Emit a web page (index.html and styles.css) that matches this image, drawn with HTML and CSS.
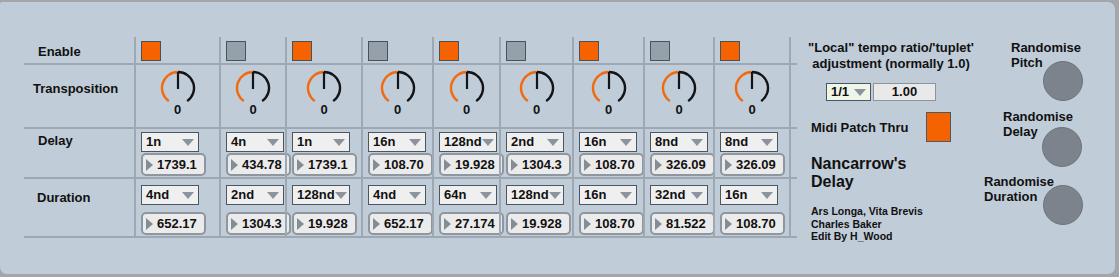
FILE: index.html
```html
<!DOCTYPE html>
<html lang="en">
<head>
  <meta charset="UTF-8" />
  <meta name="viewport" content="width=device-width, initial-scale=1" />
  <title>Nancarrow's Delay</title>
  <link rel="stylesheet" href="styles.css">
</head>
<body>

  <div class="panel">

    <!-- the 9 voice matrix -->
    <div class="matrix">
      <div class="row row-enable">
        <div class="label">Enable</div>
        <div class="cell"><span class="toggle on"></span></div>
        <div class="cell"><span class="toggle"></span></div>
        <div class="cell"><span class="toggle on"></span></div>
        <div class="cell"><span class="toggle"></span></div>
        <div class="cell"><span class="toggle on"></span></div>
        <div class="cell"><span class="toggle"></span></div>
        <div class="cell"><span class="toggle on"></span></div>
        <div class="cell"><span class="toggle"></span></div>
        <div class="cell"><span class="toggle on"></span></div>
        <div class="cell filler"></div>
      </div>

      <div class="row row-knob">
        <div class="label label-wide">Transposition</div>
        <div class="cell knob-cell"><svg class="knob" viewBox="0 0 36 36"><path class="arc-on" d="M8.82 31.11 A16 16 0 0 1 18 2"/><path class="arc-off" d="M18 2 A16 16 0 0 1 27.18 31.11"/><path class="needle" d="M18 2 L18 19"/></svg><span class="knob-value">0</span></div>
        <div class="cell knob-cell"><svg class="knob" viewBox="0 0 36 36"><path class="arc-on" d="M8.82 31.11 A16 16 0 0 1 18 2"/><path class="arc-off" d="M18 2 A16 16 0 0 1 27.18 31.11"/><path class="needle" d="M18 2 L18 19"/></svg><span class="knob-value">0</span></div>
        <div class="cell knob-cell"><svg class="knob" viewBox="0 0 36 36"><path class="arc-on" d="M8.82 31.11 A16 16 0 0 1 18 2"/><path class="arc-off" d="M18 2 A16 16 0 0 1 27.18 31.11"/><path class="needle" d="M18 2 L18 19"/></svg><span class="knob-value">0</span></div>
        <div class="cell knob-cell"><svg class="knob" viewBox="0 0 36 36"><path class="arc-on" d="M8.82 31.11 A16 16 0 0 1 18 2"/><path class="arc-off" d="M18 2 A16 16 0 0 1 27.18 31.11"/><path class="needle" d="M18 2 L18 19"/></svg><span class="knob-value">0</span></div>
        <div class="cell knob-cell"><svg class="knob" viewBox="0 0 36 36"><path class="arc-on" d="M8.82 31.11 A16 16 0 0 1 18 2"/><path class="arc-off" d="M18 2 A16 16 0 0 1 27.18 31.11"/><path class="needle" d="M18 2 L18 19"/></svg><span class="knob-value">0</span></div>
        <div class="cell knob-cell"><svg class="knob" viewBox="0 0 36 36"><path class="arc-on" d="M8.82 31.11 A16 16 0 0 1 18 2"/><path class="arc-off" d="M18 2 A16 16 0 0 1 27.18 31.11"/><path class="needle" d="M18 2 L18 19"/></svg><span class="knob-value">0</span></div>
        <div class="cell knob-cell"><svg class="knob" viewBox="0 0 36 36"><path class="arc-on" d="M8.82 31.11 A16 16 0 0 1 18 2"/><path class="arc-off" d="M18 2 A16 16 0 0 1 27.18 31.11"/><path class="needle" d="M18 2 L18 19"/></svg><span class="knob-value">0</span></div>
        <div class="cell knob-cell"><svg class="knob" viewBox="0 0 36 36"><path class="arc-on" d="M8.82 31.11 A16 16 0 0 1 18 2"/><path class="arc-off" d="M18 2 A16 16 0 0 1 27.18 31.11"/><path class="needle" d="M18 2 L18 19"/></svg><span class="knob-value">0</span></div>
        <div class="cell knob-cell"><svg class="knob" viewBox="0 0 36 36"><path class="arc-on" d="M8.82 31.11 A16 16 0 0 1 18 2"/><path class="arc-off" d="M18 2 A16 16 0 0 1 27.18 31.11"/><path class="needle" d="M18 2 L18 19"/></svg><span class="knob-value">0</span></div>
        <div class="cell filler"></div>
      </div>

      <div class="row row-delay">
        <div class="label">Delay</div>
        <div class="cell"><div class="menu"><span class="menu-text">1n</span><span class="menu-arrow"></span></div><div class="numbox"><span class="num-arrow"></span>1739.1</div></div>
        <div class="cell"><div class="menu"><span class="menu-text">4n</span><span class="menu-arrow"></span></div><div class="numbox"><span class="num-arrow"></span>434.78</div></div>
        <div class="cell"><div class="menu"><span class="menu-text">1n</span><span class="menu-arrow"></span></div><div class="numbox"><span class="num-arrow"></span>1739.1</div></div>
        <div class="cell"><div class="menu"><span class="menu-text">16n</span><span class="menu-arrow"></span></div><div class="numbox"><span class="num-arrow"></span>108.70</div></div>
        <div class="cell"><div class="menu"><span class="menu-text">128nd</span><span class="menu-arrow"></span></div><div class="numbox"><span class="num-arrow"></span>19.928</div></div>
        <div class="cell"><div class="menu"><span class="menu-text">2nd</span><span class="menu-arrow"></span></div><div class="numbox"><span class="num-arrow"></span>1304.3</div></div>
        <div class="cell"><div class="menu"><span class="menu-text">16n</span><span class="menu-arrow"></span></div><div class="numbox"><span class="num-arrow"></span>108.70</div></div>
        <div class="cell"><div class="menu"><span class="menu-text">8nd</span><span class="menu-arrow"></span></div><div class="numbox"><span class="num-arrow"></span>326.09</div></div>
        <div class="cell"><div class="menu"><span class="menu-text">8nd</span><span class="menu-arrow"></span></div><div class="numbox"><span class="num-arrow"></span>326.09</div></div>
        <div class="cell filler"></div>
      </div>

      <div class="row row-duration">
        <div class="label">Duration</div>
        <div class="cell"><div class="menu"><span class="menu-text">4nd</span><span class="menu-arrow"></span></div><div class="numbox"><span class="num-arrow"></span>652.17</div></div>
        <div class="cell"><div class="menu"><span class="menu-text">2nd</span><span class="menu-arrow"></span></div><div class="numbox"><span class="num-arrow"></span>1304.3</div></div>
        <div class="cell"><div class="menu"><span class="menu-text">128nd</span><span class="menu-arrow"></span></div><div class="numbox"><span class="num-arrow"></span>19.928</div></div>
        <div class="cell"><div class="menu"><span class="menu-text">4nd</span><span class="menu-arrow"></span></div><div class="numbox"><span class="num-arrow"></span>652.17</div></div>
        <div class="cell"><div class="menu"><span class="menu-text">64n</span><span class="menu-arrow"></span></div><div class="numbox"><span class="num-arrow"></span>27.174</div></div>
        <div class="cell"><div class="menu"><span class="menu-text">128nd</span><span class="menu-arrow"></span></div><div class="numbox"><span class="num-arrow"></span>19.928</div></div>
        <div class="cell"><div class="menu"><span class="menu-text">16n</span><span class="menu-arrow"></span></div><div class="numbox"><span class="num-arrow"></span>108.70</div></div>
        <div class="cell"><div class="menu"><span class="menu-text">32nd</span><span class="menu-arrow"></span></div><div class="numbox"><span class="num-arrow"></span>81.522</div></div>
        <div class="cell"><div class="menu"><span class="menu-text">16n</span><span class="menu-arrow"></span></div><div class="numbox"><span class="num-arrow"></span>108.70</div></div>
        <div class="cell filler"></div>
      </div>
    </div>

    <!-- tempo, midi thru and title -->
    <div class="side">
      <div class="tempo-title">"Local" tempo ratio/'tuplet'<br>adjustment (normally 1.0)</div>
      <div class="tempo-controls">
        <div class="menu menu-light"><span class="menu-text">1/1</span><span class="menu-arrow"></span></div>
        <div class="flonum">1.00</div>
      </div>
      <div class="midi">
        <span class="midi-label">Midi Patch Thru</span>
        <span class="midi-toggle"></span>
      </div>
      <div class="title">Nancarrow's<br>Delay</div>
      <div class="credits">Ars Longa, Vita Brevis<br>Charles Baker<br>Edit By H_Wood</div>
    </div>

    <!-- randomise buttons -->
    <div class="randomise">
      <div class="rand rand-pitch">
        <div class="rand-label">Randomise<br>Pitch</div>
        <div class="rand-button"></div>
      </div>
      <div class="rand rand-delay">
        <div class="rand-label">Randomise<br>Delay</div>
        <div class="rand-button"></div>
      </div>
      <div class="rand rand-duration">
        <div class="rand-label">Randomise<br>Duration</div>
        <div class="rand-button"></div>
      </div>
    </div>

  </div>

</body>
</html>
```

FILE: styles.css
```css
/* Base */
* {
  box-sizing: border-box;
}
html, body {
  margin: 0;
}
body {
  width: 1119px;
  height: 277px;
  overflow: hidden;
  background: #a3a7ac;
  font-family: "Liberation Sans", Arial, sans-serif;
  font-size: 13px;
  font-weight: bold;
  color: #111;
}
.panel {
  margin-top: 2px;
  width: 1115px;
  height: 272px;
  padding-left: 24px;
  background: #c0ccd8;
  border-radius: 2px 7px 7px 7px;
  display: flex;
  align-items: flex-start;
}

/* Matrix grid */
.matrix {
  margin-top: 35px;
  width: 773px;
}
.row {
  display: grid;
  grid-template-columns: 110px 85px 66px 76px 71px 67px 73px 71px 70px 76px 8px;
  border-bottom: 2px solid #9da8b3;
}
.row-enable { height: 28px; }
.row-knob { height: 64px; }
.row-delay { height: 50px; }
.row-duration { height: 59px; }

.label {
  padding-left: 14px;
  line-height: 15px;
  white-space: nowrap;
}
.row-enable .label { padding-top: 7px; }
.row-knob .label { padding-top: 16px; padding-left: 9px; }
.row-delay .label { padding-top: 4px; }
.row-duration .label { padding-top: 11px; padding-left: 13px; }

.cell {
  border-left: 2px solid #9da8b3;
  padding-left: 5px;
}
.filler {
  padding: 0;
}
.row-enable .cell { padding-top: 4px; }
.row-delay .cell { padding-top: 3px; }
.row-duration .cell { padding-top: 6px; }

/* Toggles */
.toggle {
  display: block;
  width: 20px;
  height: 20px;
  background: #96a0aa;
  border: 1px solid #47525d;
}
.toggle.on {
  background: #f56200;
}

/* Knobs */
.knob-cell {
  padding: 5px 0 0 0;
  display: flex;
  flex-direction: column;
  align-items: center;
}
.knob {
  width: 36px;
  height: 36px;
  fill: none;
  stroke-width: 2.4;
}
.knob .arc-on { stroke: #f26a0f; }
.knob .arc-off { stroke: #121417; }
.knob .needle { stroke: #121417; stroke-width: 2.2; }
.knob-value {
  margin-top: -3px;
  line-height: 14px;
  font-size: 13px;
}

/* Menus (umenu) */
.menu {
  width: 58px;
  height: 20px;
  padding: 0 4px 0 4px;
  background: #efefef;
  border: 1px solid #4a5662;
  display: flex;
  align-items: center;
  line-height: 18px;
}
.menu-text {
  white-space: nowrap;
}
.menu-arrow {
  margin-left: auto;
  flex-shrink: 0;
  width: 0;
  height: 0;
  border-left: 6px solid transparent;
  border-right: 6px solid transparent;
  border-top: 7px solid #8b949d;
}

/* Number boxes */
.numbox {
  width: 65px;
  height: 23px;
  margin-top: 1px;
  padding-left: 3px;
  background: #ebebeb;
  border: 2px solid #8e979f;
  border-radius: 5px;
  display: flex;
  align-items: center;
  white-space: nowrap;
}
.row-duration .numbox {
  margin-top: 7px;
}
.num-arrow {
  width: 0;
  height: 0;
  margin-right: 4px;
  border-top: 6px solid transparent;
  border-bottom: 6px solid transparent;
  border-left: 7px solid #848d96;
}

/* Side column */
.side {
  margin-left: 8px;
  width: 172px;
  padding-top: 38px;
}
.tempo-title {
  text-align: center;
  line-height: 16px;
  white-space: nowrap;
}
.tempo-controls {
  margin-top: 11px;
  padding-left: 21px;
  display: flex;
  gap: 2px;
}
.menu-light {
  width: 45px;
  height: 18px;
  background: #eef6e8;
  line-height: 16px;
}
.flonum {
  width: 63px;
  height: 18px;
  line-height: 16px;
  text-align: center;
  background: #e9e9e9;
  border: 1px solid #8c949b;
}
.midi {
  margin-top: 11px;
  padding-left: 6px;
  display: flex;
  align-items: center;
}
.midi-label {
  width: 115px;
}
.midi-toggle {
  width: 25px;
  height: 30px;
  background: #f56200;
  border: 1px solid #4f5965;
}
.title {
  margin-top: 13px;
  padding-left: 6px;
  font-size: 16px;
  line-height: 18px;
}
.credits {
  margin-top: 14px;
  padding-left: 6px;
  font-size: 10.5px;
  line-height: 12.5px;
}

/* Randomise buttons */
.randomise {
  margin-left: 7px;
  width: 104px;
  padding-top: 38px;
}
.rand-label {
  line-height: 15px;
  white-space: nowrap;
}
.rand-button {
  width: 40px;
  height: 40px;
  margin-left: 59px;
  border-radius: 50%;
  background: #7c838d;
  border: 1px solid #6d747d;
}
.rand-pitch .rand-label { margin-left: 27px; }
.rand-pitch .rand-button { margin-top: -9px; }
.rand-delay .rand-label { margin-left: 19px; margin-top: 8px; }
.rand-delay .rand-button { margin-top: -12px; margin-left: 58px; }
.rand-duration .rand-label { margin-top: 7px; }
.rand-duration .rand-button { margin-top: -19px; }
```
